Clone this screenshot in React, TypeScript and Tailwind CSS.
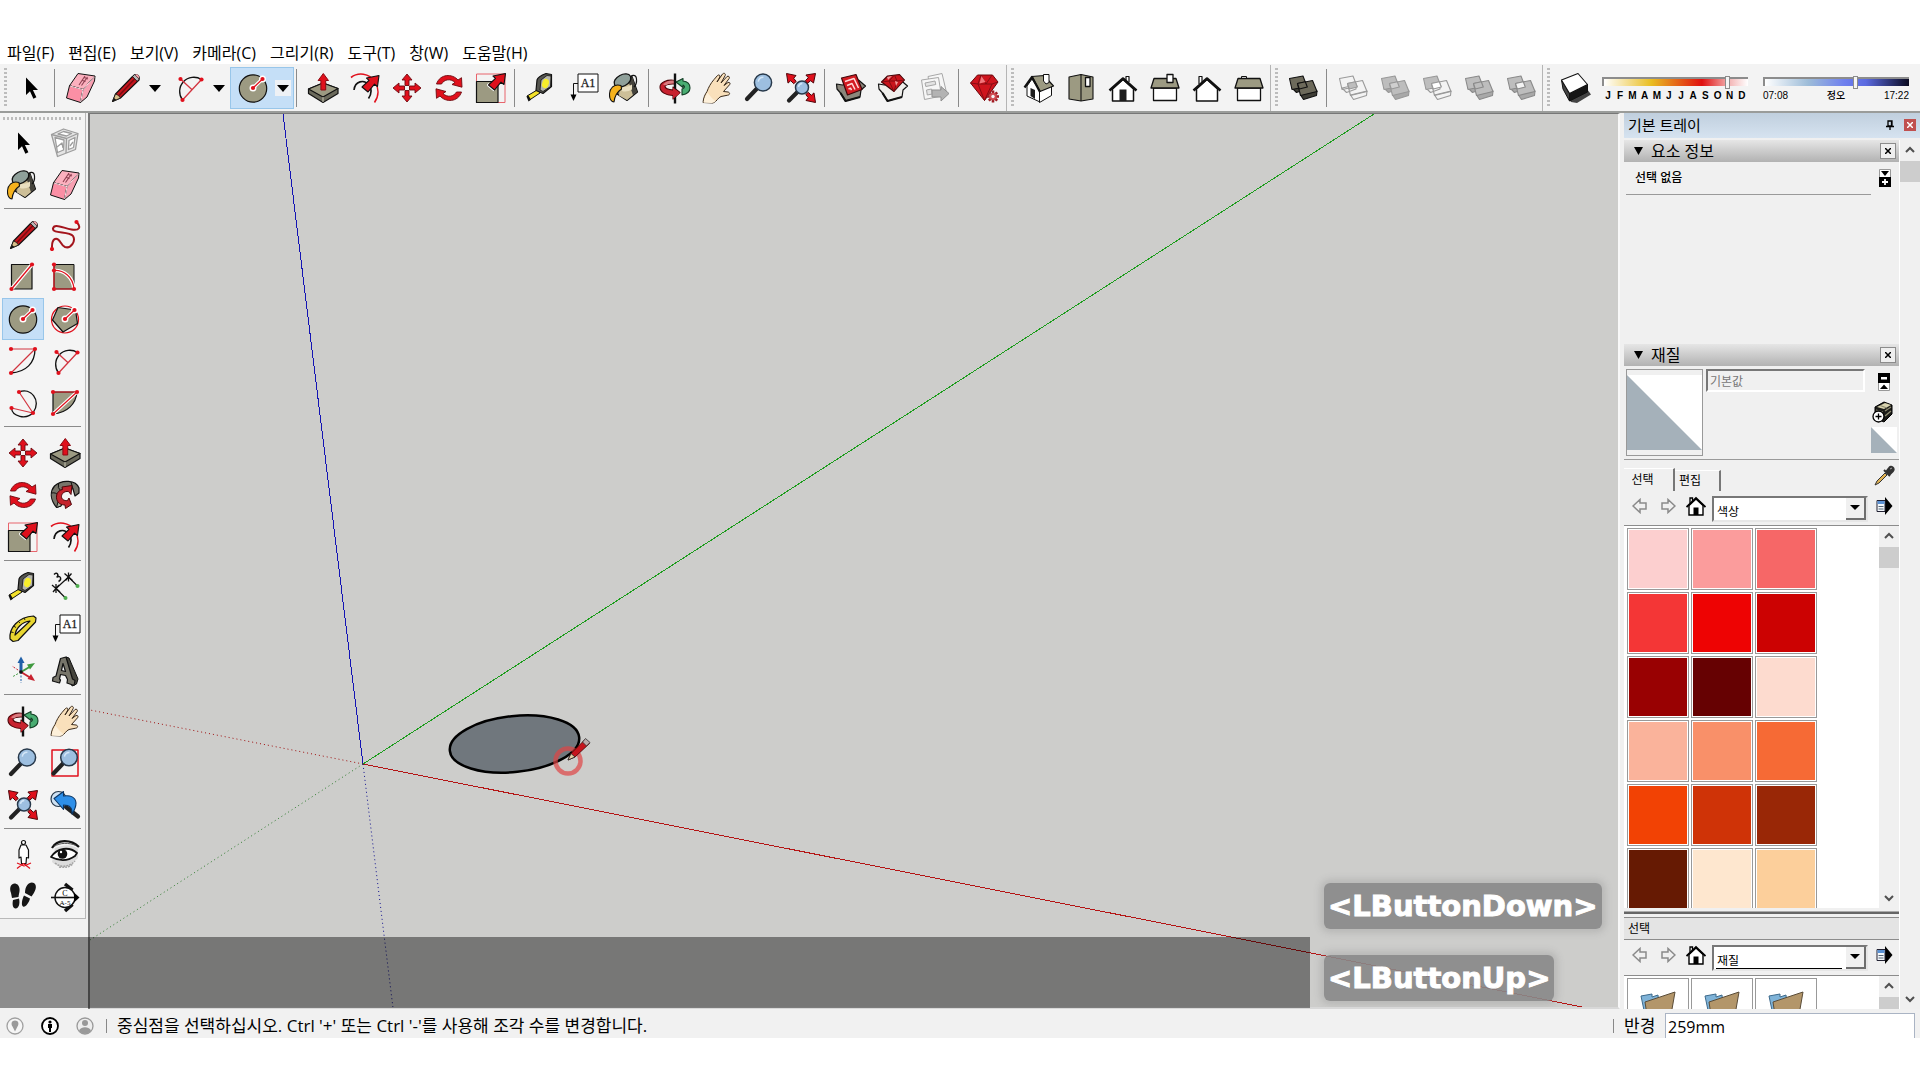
import React from "react";

type Kids = { children?: React.ReactNode };

const Svg = ({ children }: Kids) => (
  <svg viewBox="0 0 32 32" className="h-8 w-8 shrink-0" aria-hidden="true" strokeLinejoin="round">
    {children}
  </svg>
);

const K = "#111";
const R = "#e0101c";
const T = "#9c9a82";

/* ---------- shared shapes ---------- */
const Dot = ({ x, y }: { x: number; y: number }) => <circle cx={x} cy={y} r="2.1" fill={R} />;
const BigArrow = () => (
  <path d="M30.500 1.500 29 12.500l-3-2.300L19.500 18l-6-5L20.500 6.300 18 4Z" fill={R} stroke={K} strokeWidth="1.100" />
);
const Lens = ({ cx, cy, r, x2, y2 }: { cx: number; cy: number; r: number; x2: number; y2: number }) => (
  <>
    <path d={`M${cx - r * 0.7} ${cy + r * 0.7}L${x2} ${y2}`} stroke="#222" strokeWidth="4.200" strokeLinecap="round" />
    <circle cx={cx} cy={cy} r={r} fill="#9dbfe0" stroke="#27384a" strokeWidth="1.500" />
    <path d={`M${cx - r * 0.55} ${cy - r * 0.1}a${r * 0.6} ${r * 0.6} 0 0 1 ${r * 0.6} ${-r * 0.5}`} stroke="#d3e6f7" strokeWidth="1.500" fill="none" />
  </>
);

/* ---------- tool icons ---------- */
const Cursor = () => (
  <Svg>
    <path d="M11 5.500V23l4-3.700 3.400 7.400 3-1.500-3.500-7.200H23Z" fill="#000" />
  </Svg>
);
const Eraser = () => (
  <Svg>
    <path d="M13 1.500 30 4 18 17.500 4.500 13.700Z" fill="#fbb0be" stroke={K} />
    <path d="M4.500 13.700 18 17.500 15.500 30.500 1.500 26Z" fill="#fb8fa5" stroke={K} />
    <path d="M30 4 29.500 9 22 25 15.500 30.500 18 17.500Z" fill="#f8a0b2" stroke={K} />
    <path d="M5 14 18 17.600 15.600 30M18 17.600 29.500 4.700" stroke="#ffe3e8" fill="none" />
    <path d="m14 13 6-9m-3.500 9.500 6-8.500m-5 3.500 3 1m-1-4 3.500 1.500" stroke="#8d3f50" strokeWidth="1.100" fill="none" />
  </Svg>
);
const Pencil = () => (
  <Svg>
    <path d="M3.500 29.500 6.500 22 23.500 4.500Q26 1.500 28.500 3T30 8L11.500 26Z" fill="#c5151d" stroke={K} strokeWidth="1.100" />
    <path d="M3.500 29.500 6.500 22q3 .5 5 4Z" fill="#d9c08a" stroke={K} strokeWidth=".8" />
    <path d="M3.500 29.500 5 26l2.200 1.800Z" fill={K} />
    <path d="m10 23.500 16-17" stroke="#7b0a10" strokeWidth="1.500" />
    <path d="m23.500 4.500 2.200-2 4.500 4.600-2 2.200Z" fill="#b8b8b8" stroke={K} strokeWidth=".8" />
    <path d="M26 2.700q2-.9 3.200.3t.7 3.600Z" fill="#f3a2a8" />
  </Svg>
);
const ArcTwo = () => (
  <Svg>
    <path d="M28.500 7.500A14.200 14.200 0 0 0 9.500 28" fill="none" stroke={K} strokeWidth="1.300" />
    <path d="M28.500 7.500 9.500 28M7.500 7l11.300 10.500" stroke="#d23540" strokeWidth="1.300" />
    <Dot x={28.5} y={7.5} />
    <Dot x={9.5} y={28} />
    <Dot x={7.5} y={7} />
  </Svg>
);
const Spoke = () => (
  <>
    <path d="m16 16 9.500-9" stroke="#fff" strokeWidth="3.600" />
    <circle cx="16" cy="16" r="3.500" fill="#fff" />
    <circle cx="25.500" cy="7" r="3.500" fill="#fff" />
    <path d="m16 16 9.500-9" stroke={R} strokeWidth="1.300" />
    <Dot x={16} y={16} />
    <Dot x={25.5} y={7} />
  </>
);
const Circle = () => (
  <Svg>
    <circle cx="16" cy="16.500" r="13.700" fill={T} stroke={K} strokeWidth="1.200" />
    <Spoke />
  </Svg>
);
const Polygon = () => (
  <Svg>
    <circle cx="16" cy="16.500" r="13.500" fill="none" stroke={R} strokeWidth="1.200" />
    <path d="M9 4.500 26.500 7 28.500 20.500 14 29 3.500 17Z" fill={T} stroke={K} strokeWidth="1.200" />
    <Spoke />
  </Svg>
);
const PushPull = () => (
  <Svg>
    <path d="M1.500 17 16 11l15 5.500v5L16 30.500 1.500 21.500Z" fill="#6b6a5c" stroke={K} strokeWidth="1.200" />
    <path d="M1.500 17 16 11l15 5.500L16 25Z" fill={T} stroke={K} strokeWidth="1.200" />
    <path d="M16 25v5" stroke="#c9c7b4" strokeWidth="1" />
    <path d="M16.300 1.500 21.500 8.500h-2.800V18h-4.800V8.500h-2.800Z" fill={R} stroke="#8c0a12" strokeWidth="1" />
  </Svg>
);
const Offset = () => (
  <Svg>
    <path d="M2 5.500C9 0 20 1 26 9.500 30 16 30 24 25.500 30.500" fill="none" stroke={R} strokeWidth="1.600" />
    <path d="M5 18C6 9 15 7 20 13c3 4 2.500 9-.5 13.500" fill="none" stroke={K} strokeWidth="1.600" />
    <g transform="translate(-.5 2)">
      <BigArrow />
    </g>
  </Svg>
);
const Move = () => (
  <Svg>
    {[0, 90, 180, 270].map((a) => (
      <path key={a} transform={`rotate(${a} 16 16)`} d="M16 2 21 8h-3v5.500h-4V8h-3Z" fill={R} stroke="#6d0a10" strokeWidth=".9" />
    ))}
  </Svg>
);
const Rotate = () => (
  <Svg>
    {[0, 180].map((a) => (
      <path
        key={a}
        transform={`rotate(${a} 16 16)`}
        d="M3.500 12C7 1.500 19.500 1.500 25 8l3.500-2.300.5 9.500-10-2.700 3-2C17.500 6 11 7.500 8.500 12Z"
        fill={R}
        stroke="#6d0a10"
        strokeWidth=".9"
      />
    ))}
  </Svg>
);
const Scale = () => (
  <Svg>
    <path d="M1.500 30.500V2H30v28.500Z" fill="none" stroke="#e8646c" strokeWidth="1" />
    <path d="M1.500 9.500H23v21H1.500Z" fill={T} stroke={K} strokeWidth="1.200" />
    <path d="m19.500 18-6-5 1-1" stroke="#fff" strokeWidth="3" fill="none" />
    <BigArrow />
  </Svg>
);
const Tape = () => (
  <Svg>
    <path d="m2 24 11-6.500 2 3.500L4.500 28Z" fill="#f3e12a" stroke={K} />
    <path d="m1.500 24.500 2-1 2.500 4.300L3.500 29.500Z" fill={K} />
    <path d="M12 8q1-3.500 9-6.500l5.500 1v12l-8.500 7-7-3Z" fill="#55554f" stroke={K} strokeWidth="1.200" />
    <path d="m16 8 6-4.500 4 .5-.5 10.500-7.500 5-3-1.500Z" fill="#b5b5ad" stroke={K} strokeWidth=".8" />
    <ellipse cx="20.500" cy="11.500" rx="3.300" ry="4.700" transform="rotate(18 20.500 11.500)" fill="#f8ee2b" />
  </Svg>
);
const TextTool = () => (
  <Svg>
    <path d="M11 2h20v18H11Z" fill="#fff" stroke={K} />
    <path d="M11 11.500H6.500v12" fill="none" stroke={K} />
    <path d="M3.500 22.500h6l-3 6.500Z" fill="#000" />
    <text x="21" y="15" fontSize="12" textAnchor="middle" fontFamily="Liberation Serif, serif" stroke="#222" strokeWidth=".3" fill="#222">A1</text>
  </Svg>
);
const Bucket = () => (
  <Svg>
    <g transform="translate(-2 0)">
      <path d="M10 7 25 4.500 30.500 20 20 28.500 10 22Z" fill="#6e6a5e" stroke={K} strokeWidth="1.200" />
      <path d="m13 13 8.500-4 4.500 14-6 5-8-4.500Z" fill="#cdbf98" />
      <path d="m21.500 9 4.500 14 4-3-4.500-15Z" fill="#45433c" />
      <path d="M15 14.500q5 1.500 10-2v5q-5 3-10 1.500Z" fill="#e9dfc0" />
      <ellipse cx="15.500" cy="8.500" rx="9" ry="5.700" transform="rotate(-28 15.500 8.500)" fill="#8fa09a" stroke={K} strokeWidth="1.300" />
      <path d="M23.500 7c0-4.500 5.500-5 6 0 .3 3-.5 6-2.500 8" fill="none" stroke={K} strokeWidth="1.200" />
      <path d="M14 13.500C7 11.500 2.500 16 2.500 23c0 4 2 7 4.500 7 .5-5 3-10 7.500-13Z" fill="#f5b21d" stroke={K} strokeWidth="1.100" />
    </g>
  </Svg>
);
const Orbit = () => (
  <Svg>
    <path d="M17 10 24 6.500v2.500c5 .5 7 3.500 7 7 0 3.500-3 6-8 7v-6c2.500-.8 3-2 2-3-.8-.8-1-.9-1-.9v2.400Z" fill="#49ad72" stroke="#123f25" strokeWidth="1.100" />
    <path d="M16 8.500C8 7 1 10.500 1 15c0 5 6 8.500 13 8.500v3.500l7-6.500-7-5.500v3c-5-.3-8-2-8-3.500s4-3 10-2.500Z" fill="#c8222f" stroke="#4d0509" strokeWidth="1.100" />
    <path d="M16 8.500c-5-.6-10 1-12 4l3 1q2-2.500 9-2Z" fill="#d97b80" />
    <path d="M16 1.500v30" stroke={K} strokeWidth="2.400" />
    <path d="m14 15.500 7 5.500-7 6Z" fill="#c8222f" />
  </Svg>
);
const Hand = () => (
  <Svg>
    <path
      d="M2 30.500c.5-5 2-8 4-11 1.500-4 3.500-8 7-12l3.500-4c1.500-1.300 3 0 2.300 1.500L16 10l5.500-8c1.300-1.500 3.500-.4 2.700 1.500L20 11l6-6.500c1.300-1 3 .3 2.200 1.900L23 13.500l4-3c1.500-.7 2.800 1 1.600 2.200L22.500 19.500l4.500.5c2.300.5 2 3-.3 3.200L20 24.500c-3 1-4 5-8 6.500Z"
      fill="#f9e0bb"
      stroke="#3a2a1a"
      strokeWidth="1"
    />
    <path d="M2.500 30.700c1-5 2.500-8 4-10 3 4 6 7 8 8.500q-2 2-4 1.800Z" fill="#fdf0da" />
  </Svg>
);
const Zoom = () => (
  <Svg>
    <Lens cx={20} cy={10.5} r={8.6} x2={4} y2={27} />
  </Svg>
);
const ZoomWindow = () => (
  <Svg>
    <path d="M3 3h26v26H3Z" fill="none" stroke={R} strokeWidth="1.500" />
    <Lens cx={20} cy={10.5} r={8.3} x2={4.5} y2={26.5} />
  </Svg>
);
const ZoomExtents = () => (
  <Svg>
    <Lens cx={17} cy={15.5} r={6.5} x2={4} y2={28.5} />
    {[0, 90, 270].map((a) => (
      <path key={a} transform={`rotate(${a} 16 16)`} d="M30.500 1.500 28.500 11l-2.800-2.300-3.200 2.500-2.200-2.500 3-3-2.400-2.700Z" fill={R} stroke="#4d0509" strokeWidth="1" />
    ))}
  </Svg>
);
const ZoomPrevious = () => (
  <Svg>
    <circle cx="9.500" cy="10" r="7.500" fill="#cfe2f3" stroke="#27384a" strokeWidth="1.200" />
    <path d="m17 18 12 9.500" stroke="#222" strokeWidth="4.200" strokeLinecap="round" />
    <path d="M5 9.500 14.500 2.500V7c7-1 12 1 12.500 7 0 4-2 8-4 11 .5-6-2-9-8.500-9v4.500Z" fill="#2e8fe8" stroke="#0b3564" strokeWidth="1.100" />
  </Svg>
);
const BoxFlaps = ({ c }: { c: string }) => (
  <>
    <path d="m1.500 12 6 1 16-5 7 6-4.500 4-1 7-14.500 4-5-8-3.500-4Z" fill={c} stroke={K} strokeWidth="1.200" />
    <path d="m5.500 21 5 8 14.500-4" fill="none" stroke={K} strokeWidth="2.200" />
  </>
);
const Warehouse = () => (
  <Svg>
    <BoxFlaps c="#8a877c" />
    <path d="M6.500 6 21 2.500l6 15L12.500 23Z" fill="#d31b22" stroke="#41070a" strokeWidth="1.200" />
    <path d="m10 9.500 9-3 4.500 9.500M12 13.500l5-2 3 6M13.500 17l2-.8 1 2" fill="none" stroke="#ffd9d9" strokeWidth="1.500" />
  </Svg>
);
const ExtWarehouse = () => (
  <Svg>
    <BoxFlaps c="#f0efec" />
    <path d="m4.500 10 6-6 12-1.500 5 5.500-10.500 11.500Z" fill="#c9141c" stroke="#41070a" strokeWidth="1.100" />
    <path d="m4.500 10 7.500-1 5.500-6 2.500 6 7.500-1M12 9l5 10.500L20 9Z" fill="none" stroke="#7b0a10" strokeWidth=".9" />
    <path d="m10 5 5-1-4 4ZM18 9l3 1-2 4Z" fill="#f59a9c" />
  </Svg>
);
const LayoutOut = () => (
  <Svg>
    <g stroke="#a7a7a7" fill="#f6f6f6">
      <path d="M9 4.500 23 1.500l4.500 19L13 24Z" />
      <path d="m2.500 8 17-2.500 3 18.500-17 3.500Z" />
      <path d="m6 11 10-2 .8 3.500-10 2Zm1.500 7 5-1 .8 5-5 1Z" fill="#e3e3e3" />
      <path d="M13 18h9v-3.500l8 7-8 7.500v-4h-9Z" fill="#b3b3b3" stroke="#8f8f8f" />
    </g>
  </Svg>
);
const Ruby = () => (
  <Svg>
    <path d="m1.500 11 7-8h15l5.500 7L15.500 28.500Z" fill="#cf141d" stroke="#6b080d" />
    <path d="m1.500 11 7.500 1L12 3l5 9 6-9m6 7-6 2H9l6.500 16.500L23 12" fill="none" stroke="#7f0b12" strokeWidth=".9" />
    <path d="m12.500 4 4 6-6 1.500Z" fill="#f2777c" />
    <path d="M24 18.500v12M18 24.500h12M19.800 20.300l8.400 8.400M28.200 20.300l-8.400 8.400" stroke="#a01a22" strokeWidth="2.600" />
    <circle cx="24" cy="24.500" r="3.700" fill="#cf4a50" />
    <circle cx="24" cy="24.500" r="1.700" fill="#f3f3f3" />
  </Svg>
);
const HouseIso = () => (
  <Svg>
    <path d="m4 14 5-7 8 12v11L4 24Z" fill="#fff" stroke={K} />
    <path d="m16.500 19 12-5v9.500l-12 7Z" fill="#fff" stroke={K} />
    <path d="M9 4.500 21 3.500 30.500 14 17 19.500Z" fill={T} stroke={K} strokeWidth="1.200" />
    <path d="M1.500 15.500 9 5l8 15" fill="none" stroke={K} strokeWidth="2.200" />
    <path d="M20.500 9V2.500H26v8L23 12Z" fill="#fff" stroke={K} />
    <path d="m7.500 16 4.500 2v9l-4.500-3Z" fill="#1c1c1c" />
  </Svg>
);
const HouseTop = () => (
  <Svg>
    <path d="M4 5 16 2.500 28 5v22L16 29 4 27Z" fill={T} stroke={K} strokeWidth="1.100" />
    <path d="M16 2.500V29" stroke={K} strokeWidth="1.100" />
    <path d="M20.500 5.500H25v9h-4.500Z" fill="#fff" stroke={K} strokeWidth="1.300" />
  </Svg>
);
const HouseFront = ({ door, chimney }: { door?: boolean; chimney: number }) => (
  <Svg>
    <path d={`M${chimney} 12V4.500h3V10`} fill="#fff" stroke={K} strokeWidth="1.200" />
    <path d="M5.500 17 16 7.500 26.500 17v12h-21Z" fill="#fff" stroke={K} strokeWidth="1.500" />
    <path d="M2.500 18.500 16 6.500l13.500 12" fill="none" stroke={K} strokeWidth="2.600" />
    {door && <path d="M12.500 17.500h7V29h-7Z" fill="#1c1c1c" />}
  </Svg>
);
const HouseSide = ({ chimney }: { chimney: "front" | "back" }) => (
  <Svg>
    {chimney === "back" && <path d="M8.500 6.500v-2h5v2" fill="#fff" stroke={K} />}
    <path d="M4.500 16h23v12.500h-23Z" fill="#fff" stroke={K} strokeWidth="1.300" />
    <path d="M5 6.500h22L30 16H2Z" fill={T} stroke={K} strokeWidth="1.300" />
    {chimney === "front" && <path d="M18 2.500h6v8h-6Z" fill="#fff" stroke={K} strokeWidth="1.300" />}
  </Svg>
);
const Solid = ({ a, b, mid, line, side }: { a: string; b: string; mid: string; line: string; side: string }) => (
  <Svg>
    <g stroke={line} strokeWidth="1.100">
      <path d="m5 16 14-3v4l-9.500 3.500Z" fill={side} />
      <path d="M2.500 6.500 16 4l4 10.500-15 3Z" fill={a} />
      <path d="m13.500 23 16.500-4-.5 4.500-13 4Z" fill={side} />
      <path d="M10.500 11.500 25.500 8.500 30 19.500 13.500 23.500Z" fill={b} />
      <path d="m10.500 11.500 7.800-1.700 2 5.200-8 2Z" fill={mid} />
    </g>
  </Svg>
);
const ShadowBox = () => (
  <Svg>
    <path d="m8 25 20-8 4 5.500-14 8.500-6-1Z" fill="#444" />
    <path d="m2.500 8 8 13.500V29L4 17Z" fill="#444" stroke={K} />
    <path d="m10.500 21.500 18-9V20l-18 9Z" fill="#161616" stroke={K} />
    <path d="M2.500 8 19 1.500l9.500 11-18 9Z" fill="#fff" stroke={K} strokeWidth="1.100" />
  </Svg>
);
const Component = () => (
  <Svg>
    <g fill="#e4e4e4" stroke="#9d9d9d" strokeWidth="1.300">
      <path d="M2.500 7.500 14.500 2 29 6.500 26.500 22.500 8.500 29.500Z" />
      <path d="m2.500 7.500 15 4L29 6.500M17.500 11.500 17 26" fill="none" />
      <path d="m6 10.500 9 2.500-.5 10-6 2.500Zm14 3 6-3-1.500 10-5 2ZM9 7l5.500-2.500 8 2-5 2.500Z" fill="#fff" />
      <path d="m8 20 5-4 1 5M21 19l3-4" fill="none" />
    </g>
  </Svg>
);
const Freehand = () => (
  <Svg>
    <path d="M27.500 3c5 5 3 9-5 7.500C14 9 5 4 4 9.500 3 15 20 12 24 17c3 5-2 13-8 11-5-2-5-10-10-8-3.500 1.500-3 6-3 9" fill="none" stroke="#a3141c" strokeWidth="2" />
    <Dot x={27.5} y={3} />
    <Dot x={3} y={30} />
  </Svg>
);
const Rect = () => (
  <Svg>
    <path d="M4.500 3.500H25V28H4.500Z" fill={T} stroke={K} strokeWidth="1.200" />
    <path d="M4.500 28 25 3.500" stroke="#fff" strokeWidth="3.800" />
    <path d="M4.500 28 25 3.500" stroke={R} strokeWidth="1.300" />
    <Dot x={4.5} y={28} />
    <Dot x={25} y={3.5} />
  </Svg>
);
const RotRect = () => (
  <Svg>
    <path d="M5 3.500h20V28H5Z" fill={T} stroke={K} strokeWidth="1" />
    <path d="M5 9.500C15 9 24 16 25 28" stroke="#fff" strokeWidth="3.500" fill="none" />
    <path d="M5 3.500V28h20C24 16 15 9 5 9.500" stroke={R} strokeWidth="1.200" fill="none" />
    <Dot x={5} y={3.5} />
    <Dot x={5} y={9.5} />
    <Dot x={5} y={28} />
    <Dot x={25} y={28} />
  </Svg>
);
const ArcOne = () => (
  <Svg>
    <path d="M28 4C28 18 19 27 4 28" fill="none" stroke={K} strokeWidth="1.300" />
    <path d="M4 4h24L4 28" fill="none" stroke="#d23540" strokeWidth="1.200" />
    <Dot x={4} y={4} />
    <Dot x={28} y={4} />
    <Dot x={4} y={28} />
  </Svg>
);
const ArcThree = () => (
  <Svg>
    <path d="M12 5C24 0 34 13 26.500 25 19 34 5 29 4.500 21" fill="none" stroke={K} strokeWidth="1.300" />
    <path d="m12 5 14 21L4.500 21" fill="none" stroke="#d23540" strokeWidth="1.200" />
    <Dot x={12} y={5} />
    <Dot x={26} y={26} />
    <Dot x={4.5} y={21} />
  </Svg>
);
const Pie = () => (
  <Svg>
    <path d="M4 5h24C27 17 18 26 4 27Z" fill={T} stroke={K} strokeWidth="1.200" />
    <path d="M4 27 28 5" stroke="#fff" strokeWidth="3.600" />
    <path d="M4 5h24L4 27" fill="none" stroke={R} strokeWidth="1.200" />
    <Dot x={4} y={5} />
    <Dot x={28} y={5} />
    <Dot x={4} y={27} />
  </Svg>
);
const FollowMe = () => (
  <Svg>
    <path d="M30 9C27 1 13 0 5.500 7c-5 6-4 14 2 21.500l4.500-1.500 1-5C9 17 10 11 16 9l8 1 2 7 4-3Z" fill="#77756a" stroke={K} strokeWidth="1.200" />
    <path d="M9.500 4.500Q8 9 12 12M2.500 14q5-1 7 3M22 3l2 7" fill="none" stroke={K} />
    <path d="m7.500 28.500 4.500-1.500 1-5-4 1Z" fill="#a9a795" stroke={K} />
    <path d="m13 8 10-1.500-1 9-2.500-3c-4-.5-7 2-7 5 0 3 3 4.500 6 4l1.500-2.500 2.500 6.500-6 4-.5-3.500c-6 0-9-4-8.500-9 .5-4 3-6 6-6.500Z" fill="#c5222b" stroke="#4d0509" />
  </Svg>
);
const Dimension = () => (
  <Svg>
    <path d="M7 17.500 19.500 6M7 17.500l9 9M19.500 6l9 9" stroke={K} strokeWidth="1.200" />
    <path d="M3 14l8 7M4 21l6-7M7 13v9M15.500 2.500l8 7M16.500 9.500l6-7M19.500 1.500v9" stroke={K} strokeWidth="1.300" />
    <circle cx="16.500" cy="27" r="2" fill="#4fae4f" />
    <circle cx="28.500" cy="15" r="2" fill="#4fae4f" />
    <path d="M5 3.500c3-3 5 0 3 2.500 4-2 5 3 1.500 4.500" fill="none" stroke={K} strokeWidth="1.400" />
  </Svg>
);
const Protractor = () => (
  <Svg>
    <path fillRule="evenodd" d="M3 26C2 15 11 4 26.500 3l2.500 2-.5 4L11 27.500 6 28.500Zm5-4C9 15 15 9 23 8Z" fill="#e8d630" stroke={K} strokeWidth="1.200" />
    <path d="m4 19 2.500.5M6.500 13l2.500 1.500M11 8l2 2M17 5l1 2" stroke={K} strokeWidth=".9" />
  </Svg>
);
const Axes = () => (
  <Svg>
    <path d="M14 17V6" stroke="#1f5fa8" strokeWidth="3" />
    <path d="M10.500 8 14 1.500 17.500 8Z" fill="#1f5fa8" />
    <path d="m14 17 8.500-5" stroke="#3f9a3f" strokeWidth="2" />
    <path d="m20 9.500 8-1.500-5 6.500Z" fill="#3f9a3f" />
    <path d="m14 17 9 5.500" stroke="#c8222f" strokeWidth="2" />
    <path d="m20.500 24 7.500 2-4-7Z" fill="#c8222f" />
    <path d="m14 17-9-6" stroke="#c8222f" strokeDasharray="2 1.500" />
    <path d="m14 17-8 4.500" stroke="#3f9a3f" strokeDasharray="2 1.500" />
    <path d="M14 17v11" stroke="#1f5fa8" strokeDasharray="2 1.500" />
    <circle cx="14" cy="17" r="1.800" fill="#111" />
  </Svg>
);
const Text3d = () => (
  <Svg>
    <path d="m17 2 3 1 9 21-1.500 5-4.500 2Z" fill="#45443c" stroke={K} />
    <path fillRule="evenodd" d="M11.500 3.500 17 2l6.500 22 2.500 1.500-1 5-7-2.500.5-3.500-2-4-5-1L10.500 24l1 1-1 3-7-2 .5-3.500 3-1.500Zm2.500 5-1.500 7 4 1Z" fill="#77756a" stroke={K} strokeWidth="1.200" />
  </Svg>
);
const Walkman = () => (
  <Svg>
    <g fill="#fff" stroke={K} strokeWidth="1.200">
      <circle cx="16.500" cy="3.500" r="2" />
      <path d="M14 6h5l2.500 5v8l-2-.5-.5 6h-4.500L14 18l-2 1v-8Z" />
    </g>
    <path d="m10 29.500 6.500-5 6.500 5M10 24l7 3 7-3" stroke={R} fill="none" strokeWidth="1.200" />
  </Svg>
);
const Eye = () => (
  <Svg>
    <path d="M3 23c6 6 16 7 26-4V10Q20 3 6 9Z" fill="#dcdcdc" />
    <path d="M3 9C8 0 22 0 30 8" fill="none" stroke={K} strokeWidth="2.200" />
    <path d="M5 7.500c6-4 15-4 22-1" fill="none" stroke="#555" />
    <path d="M2 18C8 9 20 7 28 14l-2 3C19 22 10 22 2 18Z" fill="#fff" stroke={K} strokeWidth="1.800" />
    <circle cx="13.500" cy="15" r="4.800" fill="#111" />
    <circle cx="12" cy="13" r="1.200" fill="#fff" />
    <path d="M6 24c6 5 14 4 20-2M10 28c6 1 10 0 14-3" stroke="#a5a5a5" fill="none" strokeWidth="1.500" strokeDasharray="2 1" />
  </Svg>
);
const Feet = () => (
  <Svg>
    <path d="M4 12C1 4 7 0 11 4c3 4 1 8 .5 12L5 17Zm2 7 6-1.500c1.500 6-1 10.500-3.500 10S5 24 6 19Z" fill="#161616" />
    <path d="M18 12c0-8 5-12 9-10 4 3 1 9-2.500 13.500Zm-1 2.500 6 3C22 22 18 27 16 25.500s-1-7 1-11Z" fill="#161616" />
  </Svg>
);
const Section = () => (
  <Svg>
    <path d="m16 3 7.500 6M16 30l7.500-6.500" stroke={K} strokeWidth="3.500" />
    <circle cx="16" cy="16.500" r="10" fill="#fff" stroke={K} strokeWidth="1.400" />
    <path d="M2 16.500h27" stroke={K} strokeWidth="1.600" />
    <path d="m25 11.500 5.500 5-5.500 5Z" fill="#000" />
    <text x="16" y="14.500" fontSize="8" textAnchor="middle" fontFamily="Liberation Serif, serif">C</text>
    <text x="16" y="23.500" fontSize="7" textAnchor="middle" fontFamily="Liberation Serif, serif">A-5</text>
  </Svg>
);

/* ---------- toolbar parts ---------- */
const Tool = ({ label, on, children }: Kids & { label: string; on?: boolean }) => (
  <button
    type="button"
    aria-label={label}
    className={
      on
        ? "flex h-[42px] w-[42px] shrink-0 items-center justify-center border border-[#98c6ea] bg-[#c5dff7]"
        : "flex h-[42px] w-[42px] shrink-0 items-center justify-center"
    }
  >
    {children}
  </button>
);
const Split = ({ label, on, children }: Kids & { label: string; on?: boolean }) => (
  <div
    className={
      on
        ? "flex h-[42px] w-16 shrink-0 items-center justify-between border border-[#98c6ea] bg-[#c5dff7] pr-0.5 pl-1.5"
        : "flex h-[42px] w-16 shrink-0 items-center justify-between pr-[3px] pl-[7px]"
    }
  >
    <button type="button" aria-label={label}>{children}</button>
    <button type="button" aria-label={`${label} 옵션`} className={on ? "flex h-4 w-4 items-center justify-center bg-[#eef1f5]" : "flex h-4 w-4 items-center justify-center"}>
      <svg viewBox="0 0 12 7" className="h-[7px] w-3" aria-hidden="true"><path d="M0 0h12L6 7Z" /></svg>
    </button>
  </div>
);
const Sep = () => <span className="ml-0.5 mr-[5px] h-[38px] w-px shrink-0 bg-[#8a8a8a]" />;
const Grip = () => (
  <span className="flex h-full shrink-0 items-center">
    <span className="h-full w-px bg-[#b5b5b5]" />
    <span className="mx-1 h-10 w-[3px] bg-[repeating-linear-gradient(180deg,#bcbcbc_0_2px,transparent_2px_4px)]" />
  </span>
);
const SideSep = () => <div className="mx-1 mt-0.5 mb-[5px] h-px bg-[#8a8a8a]" />;
const Pair = ({ children }: Kids) => <div className="grid grid-cols-[42px_42px] pl-0.5">{children}</div>;

const Chevron = ({ up }: { up?: boolean }) => (
  <svg viewBox="0 0 12 12" className="h-3 w-3" aria-hidden="true">
    <path d={up ? "M2 8l4-4 4 4" : "M2 4l4 4 4-4"} fill="none" stroke="#505050" strokeWidth="2" />
  </svg>
);

const menus = ["파일(F)", "편집(E)", "보기(V)", "카메라(C)", "그리기(R)", "도구(T)", "창(W)", "도움말(H)"];

const MenuBar = () => (
  <nav className="flex h-6 items-center gap-3.5 pt-0.5 pl-[7px] text-base leading-none">
    {menus.map((m) => (
      <button type="button" key={m} className="whitespace-nowrap">{m}</button>
    ))}
  </nav>
);

const thumb =
  "[&::-webkit-slider-thumb]:h-[13px] [&::-webkit-slider-thumb]:w-[5px] [&::-webkit-slider-thumb]:appearance-none [&::-webkit-slider-thumb]:border [&::-webkit-slider-thumb]:border-[#8c8c8c] [&::-webkit-slider-thumb]:bg-[#f5f5f5]";

const TopBar = () => (
  <div className="flex h-[49px] shrink-0 items-center border-b-2 border-[#9a9c9a] bg-[#f3f3f3] pt-px">
    <span className="mr-[3px] ml-1 h-10 w-[3px] shrink-0 bg-[repeating-linear-gradient(180deg,#bcbcbc_0_2px,transparent_2px_4px)]" />
    <Tool label="선택"><Cursor /></Tool>
    <Sep />
    <Tool label="지우개"><Eraser /></Tool>
    <Split label="선"><Pencil /></Split>
    <Split label="호"><ArcTwo /></Split>
    <Split label="원" on><Circle /></Split>
    <Sep />
    <Tool label="밀기/끌기"><PushPull /></Tool>
    <Tool label="오프셋"><Offset /></Tool>
    <Tool label="이동"><Move /></Tool>
    <Tool label="회전"><Rotate /></Tool>
    <Tool label="배율"><Scale /></Tool>
    <Sep />
    <Tool label="줄자"><Tape /></Tool>
    <Tool label="텍스트"><TextTool /></Tool>
    <Tool label="페인트통"><Bucket /></Tool>
    <Sep />
    <Tool label="궤도"><Orbit /></Tool>
    <Tool label="이동 보기"><Hand /></Tool>
    <Tool label="확대/축소"><Zoom /></Tool>
    <Tool label="범위 확대"><ZoomExtents /></Tool>
    <Sep />
    <Tool label="3D Warehouse"><Warehouse /></Tool>
    <Tool label="Extension Warehouse"><ExtWarehouse /></Tool>
    <Tool label="LayOut"><LayoutOut /></Tool>
    <Sep />
    <Tool label="루비"><Ruby /></Tool>
    <Grip />
    <Tool label="등각"><HouseIso /></Tool>
    <Tool label="평면"><HouseTop /></Tool>
    <Tool label="정면"><HouseFront door chimney={19} /></Tool>
    <Tool label="오른쪽"><HouseSide chimney="front" /></Tool>
    <Tool label="후면"><HouseFront chimney={8} /></Tool>
    <Tool label="왼쪽"><HouseSide chimney="back" /></Tool>
    <Grip />
    <Tool label="외부 셸"><Solid a="#6d6a5b" b="#6d6a5b" mid="#6d6a5b" line="#111" side="#3f3e36" /></Tool>
    <Sep />
    <Tool label="교차"><Solid a="none" b="none" mid="#bdbdbd" line="#9a9a9a" side="none" /></Tool>
    <Tool label="결합"><Solid a="#bdbdbd" b="#bdbdbd" mid="#cfcfcf" line="#989898" side="#a8a8a8" /></Tool>
    <Tool label="빼기"><Solid a="#bdbdbd" b="none" mid="#ffffff" line="#989898" side="none" /></Tool>
    <Tool label="트림"><Solid a="#bdbdbd" b="#bdbdbd" mid="#bdbdbd" line="#8a8a8a" side="#a8a8a8" /></Tool>
    <Tool label="분할"><Solid a="#bdbdbd" b="#bdbdbd" mid="#f3f3f3" line="#8a8a8a" side="#a8a8a8" /></Tool>
    <Grip />
    <Tool label="그림자"><ShadowBox /></Tool>
    <div className="ml-1.5 w-[146px] shrink-0 pt-0.5">
      <input
        type="range"
        aria-label="날짜"
        min={0}
        max={100}
        defaultValue={87}
        className={`block h-[9px] w-full appearance-none border-t-2 border-l-2 border-[#8c8c8c] bg-[linear-gradient(90deg,#fff_0%,#e9bd20_33%,#e01010_68%,#f3b5b5_87%,#fff_100%)] ${thumb}`}
      />
      <div className="mt-1 flex justify-between px-0.5 font-['Liberation_Sans',sans-serif] text-[10px] leading-3 font-bold">
        {"JFMAMJJASOND".split("").map((m, i) => (
          <span key={i} className="w-2 text-center">{m}</span>
        ))}
      </div>
    </div>
    <div className="ml-[15px] w-[146px] shrink-0 pt-0.5">
      <input
        type="range"
        aria-label="시간"
        min={0}
        max={100}
        defaultValue={63}
        className={`block h-[9px] w-full appearance-none border-t-2 border-l-2 border-[#8c8c8c] bg-[linear-gradient(90deg,#fff_0%,#9dbcd8_30%,#6f80ee_55%,#5b6ae0_70%,#0a0a20_100%)] ${thumb}`}
      />
      <div className="mt-1 flex justify-between font-['Liberation_Sans','Noto_Sans_CJK_KR',sans-serif] text-[10px] leading-3 font-medium">
        <span>07:08</span>
        <span>정오</span>
        <span>17:22</span>
      </div>
    </div>
  </div>
);

const SideBar = () => (
  <aside className="w-[90px] shrink-0 border-r-2 border-[#777] bg-[#f1f1f1]">
    <div className="mr-0.5 border-r border-b border-[#b9b9b9] bg-[#f4f4f4] pt-1">
      <div className="mx-[3px] mb-0.5 h-[3px] bg-[repeating-linear-gradient(90deg,#bcbcbc_0_2px,transparent_2px_4px)]" />
      <Pair>
        <Tool label="선택"><Cursor /></Tool>
        <Tool label="구성 요소"><Component /></Tool>
        <Tool label="페인트통"><Bucket /></Tool>
        <Tool label="지우개"><Eraser /></Tool>
      </Pair>
      <SideSep />
      <Pair>
        <Tool label="선"><Pencil /></Tool>
        <Tool label="자유형"><Freehand /></Tool>
        <Tool label="직사각형"><Rect /></Tool>
        <Tool label="회전된 직사각형"><RotRect /></Tool>
        <Tool label="원" on><Circle /></Tool>
        <Tool label="다각형"><Polygon /></Tool>
        <Tool label="호"><ArcOne /></Tool>
        <Tool label="2점 호"><ArcTwo /></Tool>
        <Tool label="3점 호"><ArcThree /></Tool>
        <Tool label="파이"><Pie /></Tool>
      </Pair>
      <SideSep />
      <Pair>
        <Tool label="이동"><Move /></Tool>
        <Tool label="밀기/끌기"><PushPull /></Tool>
        <Tool label="회전"><Rotate /></Tool>
        <Tool label="따라가기"><FollowMe /></Tool>
        <Tool label="배율"><Scale /></Tool>
        <Tool label="오프셋"><Offset /></Tool>
      </Pair>
      <SideSep />
      <Pair>
        <Tool label="줄자"><Tape /></Tool>
        <Tool label="치수"><Dimension /></Tool>
        <Tool label="각도기"><Protractor /></Tool>
        <Tool label="텍스트"><TextTool /></Tool>
        <Tool label="축"><Axes /></Tool>
        <Tool label="3D 텍스트"><Text3d /></Tool>
      </Pair>
      <SideSep />
      <Pair>
        <Tool label="궤도"><Orbit /></Tool>
        <Tool label="이동 보기"><Hand /></Tool>
        <Tool label="확대/축소"><Zoom /></Tool>
        <Tool label="창 확대"><ZoomWindow /></Tool>
        <Tool label="범위 확대"><ZoomExtents /></Tool>
        <Tool label="이전"><ZoomPrevious /></Tool>
      </Pair>
      <SideSep />
      <Pair>
        <Tool label="카메라 위치"><Walkman /></Tool>
        <Tool label="둘러보기"><Eye /></Tool>
        <Tool label="걷기"><Feet /></Tool>
        <Tool label="단면"><Section /></Tool>
      </Pair>
    </div>
  </aside>
);

const KeyBadge = ({ children }: Kids) => (
  <div className="flex h-[46px] items-center rounded-md bg-[#888]/90 px-1 font-['DejaVu_Sans',sans-serif] text-[29px] leading-none font-bold text-white shadow-[0_0_6px_4px_rgba(140,140,140,0.3)] [-webkit-text-stroke:1px_white]">
    {children}
  </div>
);

const Viewport = () => (
  <main className="relative min-w-0 flex-1 overflow-hidden border-t border-r-2 border-b-2 border-t-[#777] border-r-[#f8f8f8] border-b-[#d8d8d8] bg-[#cdcdcb]">
    <svg viewBox="90 114 1528 894" preserveAspectRatio="xMinYMin slice" className="block h-full w-full" aria-label="모델">
      <g fill="none" strokeWidth="1" shapeRendering="crispEdges">
        <path d="M363 764 283 114" stroke="#1414b4" />
        <path d="M363 764 1374 114" stroke="#1c9c1c" />
        <path d="M363 764 1587 1008" stroke="#b41414" />
      </g>
      <g fill="none" strokeWidth="1" strokeDasharray="1 3">
        <path d="M363 764 90 710" stroke="#a01010" />
        <path d="M363 764 90 940" stroke="#2c7a2c" />
        <path d="m363 764 30 244" stroke="#101090" />
      </g>
      <ellipse cx="514.500" cy="744" rx="65" ry="28" transform="rotate(-6 514.500 744)" fill="#70777d" stroke="#000" strokeWidth="2.500" />
      <circle cx="568" cy="761" r="12.500" fill="none" stroke="#e04444" strokeOpacity=".7" strokeWidth="4.500" />
      <path d="m568 760 3-6.500 14-14 4.500 4-14.500 13.500Z" fill="#c5151d" stroke="#400" strokeWidth=".8" />
      <path d="m568 760 3-6.500 4 3.500Z" fill="#e4d3a8" stroke="#222" strokeWidth=".8" />
      <path d="m582.500 742 3-3.500 4.500 4-3.500 3.500Z" fill="#b9a9a9" stroke="#333" strokeWidth=".8" />
    </svg>
    <div className="absolute bottom-1.5 left-[1234px] flex flex-col items-start gap-[26px]">
      <KeyBadge>&lt;LButtonDown&gt;</KeyBadge>
      <KeyBadge>&lt;LButtonUp&gt;</KeyBadge>
    </div>
  </main>
);

const PanelHead = ({ children }: Kids) => (
  <div className="flex h-[22px] shrink-0 items-center bg-linear-to-b from-[#e6e6e6] to-[#b2b2b2] pr-[3px] pl-2.5">
    <svg viewBox="0 0 9 8" className="h-2 w-[9px]" aria-hidden="true"><path d="M0 0h9L4.500 8Z" /></svg>
    <h2 className="flex-1 pl-2 text-base leading-none">{children}</h2>
    <button type="button" aria-label="닫기" className="flex h-4 w-4 items-center justify-center border border-[#8c8c8c] bg-[#efefef]">
      <svg viewBox="0 0 6 6" className="h-1.5 w-1.5" aria-hidden="true"><path d="m0 0 6 6M6 0 0 6" stroke="#000" strokeWidth="1.500" /></svg>
    </button>
  </div>
);

const Expand = ({ down }: { down?: boolean }) => (
  <svg viewBox="0 0 12 18" className="h-[18px] w-3" aria-hidden="true">
    <path d="M.5.500h11v17H.5Z" fill="#fff" stroke="#999" />
    {down ? (
      <>
        <path d="M2 2h8L6 7Z" />
        <path d="M0 8h12v10H0Z" />
        <path d="M3 13h6M6 10v6" stroke="#fff" strokeWidth="1.800" />
      </>
    ) : (
      <>
        <path d="M0 0h12v10H0Z" />
        <path d="M3 4h6v2.500H3Z" fill="#fff" />
        <path d="M2 16h8l-4-4.500Z" />
      </>
    )}
  </svg>
);

const NavRow = ({ value, label, line }: { value: string; label: string; line?: boolean }) => (
  <div className="flex h-[35px] shrink-0 items-center pr-1.5 pl-2">
    <button type="button" aria-label="뒤로" className="mb-1.5">
      <svg viewBox="0 0 16 16" className="h-4 w-4" aria-hidden="true"><path d="M1 8 8 1.500V5h6v6H8v3.500Z" fill="none" stroke="#8a8a8a" strokeWidth="1.500" /></svg>
    </button>
    <button type="button" aria-label="앞으로" className="mb-1.5 ml-3">
      <svg viewBox="0 0 16 16" className="h-4 w-4" aria-hidden="true"><path d="M15 8 8 1.500V5H2v6h6v3.500Z" fill="none" stroke="#8a8a8a" strokeWidth="1.500" /></svg>
    </button>
    <button type="button" aria-label="모델에서" className="mb-1.5 ml-2.5">
      <svg viewBox="0 0 20 20" className="h-5 w-5" aria-hidden="true">
        <path d="M4 7V2h2.500v3" fill="#fff" stroke="#000" strokeWidth="1.300" />
        <path d="M3 9.500 10 3l7 6.500V19H3Z" fill="#fff" stroke="#000" strokeWidth="1.400" />
        <path d="M.5 11 10 2l9.500 9" fill="none" stroke="#000" strokeWidth="1.800" />
        <path d="M7.500 11.500h5V19h-5Z" />
      </svg>
    </button>
    <div className="relative ml-1.5 h-[26px] min-w-0 flex-1 border-2 border-t-[#777] border-r-[#e6e6e6] border-b-[#e6e6e6] border-l-[#777] bg-white">
      <select aria-label={label} className="h-full w-full appearance-none bg-transparent pl-[3px] text-xs leading-none">
        <option>{value}</option>
      </select>
      {line && <span className="pointer-events-none absolute right-6 bottom-0 left-0.5 h-px bg-black" />}
      <span className="pointer-events-none absolute top-0 right-0 flex h-[22px] w-5 items-center justify-center border-r-2 border-b-2 border-[#6e6e6e] bg-[#f0f0f0]">
        <svg viewBox="0 0 10 5" className="h-[5px] w-2.5" aria-hidden="true"><path d="M0 0h10L5 5Z" /></svg>
      </span>
    </div>
    <button type="button" aria-label="세부 정보" className="mb-1.5 ml-2">
      <svg viewBox="0 0 17 18" className="h-[18px] w-[17px]" aria-hidden="true">
        <path d="M7 4h2V0l7.500 9L9 18v-4H7Z" />
        <path d="M1 3.500h8v11H1Z" fill="#f4f8fc" stroke="#223" />
        <path d="M1.500 4h7v3h-7Z" fill="#5b92d4" />
        <path d="M2.500 9.500h5m-5 2.500h5" stroke="#567" />
      </svg>
    </button>
  </div>
);

const swatches: [string, string][] = [
  ["A01", "bg-[#fccfcf]"], ["A02", "bg-[#fb9c9c]"], ["A03", "bg-[#f66767]"],
  ["A04", "bg-[#f43636]"], ["A05", "bg-[#ee0303]"], ["A06", "bg-[#cc0202]"],
  ["A07", "bg-[#990102]"], ["A08", "bg-[#660102]"], ["B01", "bg-[#fddbcf]"],
  ["B02", "bg-[#fab39b]"], ["B03", "bg-[#f99069]"], ["B04", "bg-[#f66a35]"],
  ["B05", "bg-[#f24204]"], ["B06", "bg-[#cf3307]"], ["B07", "bg-[#992706]"],
  ["B08", "bg-[#661a03]"], ["C01", "bg-[#fee7cf]"], ["C02", "bg-[#fccf9b]"],
];

const Folder = () => (
  <svg viewBox="0 0 36 24" className="h-6 w-9" aria-hidden="true">
    <path d="m1 5 11-2v3l6-2 2 20H5Z" fill="#7fb3d8" stroke="#3d6a8c" />
    <path d="M5 11 35 1l-4 23H7Z" fill="#b3966a" stroke="#5a4c38" />
  </svg>
);

const Tray = () => (
  <aside className="flex w-[300px] shrink-0 flex-col bg-[#f0f0f0] pl-1">
    <header className="flex h-[25px] shrink-0 items-center bg-linear-to-b from-[#c0cfde] to-[#d6e3f0] pr-1 pb-px pl-1">
      <h1 className="flex-1 text-[15px] leading-none">기본 트레이</h1>
      <button type="button" aria-label="고정" className="mr-2.5">
        <svg viewBox="0 0 8 10" className="h-2.5 w-2" aria-hidden="true"><path d="M2 1h4v5H2ZM0 6.500h8M4 7v3M5.500 1v5" fill="none" stroke="#000" strokeWidth="1.300" /></svg>
      </button>
      <button type="button" aria-label="트레이 닫기" className="flex h-3 w-3 items-center justify-center bg-[#c0504f]">
        <svg viewBox="0 0 6 6" className="h-1.5 w-1.5" aria-hidden="true"><path d="m0 0 6 6M6 0 0 6" stroke="#fff" strokeWidth="1.500" /></svg>
      </button>
    </header>
    <div className="flex min-h-0 flex-1 pt-0.5">
      <div className="flex min-w-0 flex-1 flex-col">
        <PanelHead>요소 정보</PanelHead>
        <section className="h-[182px] shrink-0 pr-2 pl-0.5">
          <div className="mr-5 flex h-[33px] items-center border-b border-[#9a9a9a] pl-[9px]">
            <span className="flex-1 text-xs font-medium">선택 없음</span>
            <button type="button" aria-label="세부 정보 표시" className="-mr-5"><Expand down /></button>
          </div>
        </section>
        <PanelHead>재질</PanelHead>
        <section className="flex h-[94px] shrink-0 border-b border-[#9a9a9a] pt-[3px] pr-0.5 pl-0.5">
          <div className="h-[87px] w-[77px] border border-[#999] pt-[5px]">
            <svg viewBox="0 0 75 75" className="h-[75px] w-[75px] bg-white" aria-hidden="true"><path d="M0 0v75h75Z" fill="#a5b1ba" /></svg>
          </div>
          <input
            aria-label="재질 이름"
            disabled
            value="기본값"
            readOnly
            className="ml-[3px] h-[23px] min-w-0 flex-1 border-2 border-t-[#777] border-r-[#fff] border-b-[#fff] border-l-[#777] bg-[#f0f0f0] pl-0.5 text-xs leading-none text-[#777]"
          />
          <div className="flex w-8 flex-col items-end pt-1">
            <button type="button" aria-label="보조 창 표시" className="mr-[7px]"><Expand /></button>
            <button type="button" aria-label="재질 만들기" className="mt-2.5 mr-1">
              <svg viewBox="0 0 21 22" className="h-[22px] w-[21px]" aria-hidden="true">
                <path d="m3 6 9-5 8 3v9l-8 8-9-4Z" fill="#1b1b18" stroke="#000" />
                <path d="m5 6 8-4 6 2-7 4Z" fill="#d9d4b0" />
                <path d="m8 4.500 7 2.500M13 10l6-4m-6 9 6-5M4 9l7 2" stroke="#8e8b70" strokeWidth="1.300" />
                <circle cx="6.500" cy="15.500" r="5.500" fill="#fff" stroke="#000" strokeWidth="1.300" />
                <path d="M3.500 15.500h6m-3-3v6" stroke="#000" strokeWidth="1.300" />
              </svg>
            </button>
            <svg viewBox="0 0 26 26" className="mt-1 h-[26px] w-[26px] bg-white" aria-hidden="true"><path d="M0 0v26h26Z" fill="#a5b1ba" /></svg>
          </div>
        </section>
        <section className="flex h-[31px] shrink-0 items-end pr-1 text-xs leading-none" role="tablist">
          <button type="button" role="tab" aria-selected="true" className="h-[23px] w-[51px] border-t border-r-2 border-t-white border-r-[#777] pr-3">선택</button>
          <button type="button" role="tab" aria-selected="false" className="h-[21px] w-[46px] border-t border-r-2 border-t-white border-r-[#777] pr-3.5">편집</button>
          <button type="button" aria-label="샘플 페인트" className="mb-1 ml-auto">
            <svg viewBox="0 0 22 22" className="h-[22px] w-[22px]" aria-hidden="true">
              <path d="m2 20 2-4 8-8 2 2-8 8Z" fill="#e0b253" stroke="#333" />
              <path d="m11 5 6 6M13 7l3-4c2-3 6 0 4 3l-4 4Z" fill="#333" stroke="#333" strokeWidth="2" />
              <path d="m17 4 2-1" stroke="#aaa" />
            </svg>
          </button>
        </section>
        <NavRow value="색상" label="재질 모음" />
        <div className="-mt-px flex min-h-0 flex-1 border-t border-[#8c8c8c]">
          <div className="grid min-w-0 flex-1 grid-cols-[62px_62px_62px] content-start gap-0.5 overflow-hidden bg-white pt-0.5 pl-[3px]">
            {swatches.map(([name, color]) => (
              <button type="button" key={name} aria-label={name} className="h-[62px] border border-[#999] p-px">
                <span className={`block h-full w-full ${color}`} />
              </button>
            ))}
          </div>
          <div className="flex w-5 shrink-0 flex-col items-center bg-[#f0f0f0] pt-1">
            <Chevron up />
            <span className="mt-[5px] h-[21px] w-5 bg-[#cdcdcd]" />
            <span className="mt-auto mb-1"><Chevron /></span>
          </div>
        </div>
        <div className="mt-[3px] mb-[3px] h-[3px] shrink-0 border-t border-b-2 border-t-[#aaa] border-b-[#666]" />
        <div className="flex h-[23px] shrink-0 items-center border-y border-[#8c8c8c] bg-[#e4e4e4] pl-1 text-xs">선택</div>
        <NavRow value="재질" label="보조 모음" line />
        <div className="flex h-[34px] shrink-0 border-t border-[#8c8c8c]">
          <div className="grid min-w-0 flex-1 grid-cols-[62px_62px_62px] gap-0.5 overflow-hidden bg-white pt-0.5 pl-[3px]">
            {["벽돌", "석재", "목재"].map((f) => (
              <button type="button" key={f} aria-label={f} className="flex h-[62px] justify-center border border-[#999] pt-3"><Folder /></button>
            ))}
          </div>
          <div className="flex w-5 shrink-0 flex-col items-center bg-[#f0f0f0] pt-1">
            <Chevron up />
            <span className="mt-[5px] w-5 flex-1 bg-[#cdcdcd]" />
          </div>
        </div>
      </div>
      <div className="flex w-[21px] shrink-0 flex-col items-center border-l border-white bg-[#f0f0f0] pt-1">
        <Chevron up />
        <span className="mt-[5px] h-[21px] w-5 bg-[#cdcdcd]" />
        <span className="mt-auto mb-1"><Chevron /></span>
      </div>
    </div>
  </aside>
);

const StatusBar = () => (
  <footer className="flex h-[29px] shrink-0 items-center bg-[#f1f1f1] pt-1 pl-1.5 leading-none">
    <button type="button" aria-label="위치 정보">
      <svg viewBox="0 0 18 18" className="h-[18px] w-[18px]" aria-hidden="true">
        <circle cx="9" cy="9" r="8" fill="#f6f6f6" stroke="#a0a0a0" strokeWidth="1.300" />
        <path d="M9 3.500c4 0 4 4 2.500 6L9 14.500 6.500 9.500C5 7.500 5 3.500 9 3.500Z" fill="#9a9a9a" />
      </svg>
    </button>
    <button type="button" aria-label="크레디트" className="ml-[17px]">
      <svg viewBox="0 0 18 18" className="h-[18px] w-[18px]" aria-hidden="true">
        <circle cx="9" cy="9" r="8" fill="#fff" stroke="#000" strokeWidth="1.800" />
        <circle cx="9" cy="5" r="1.600" />
        <path d="M7 7h4v4h-1v4H8v-4H7Z" />
      </svg>
    </button>
    <button type="button" aria-label="로그인" className="ml-[17px]">
      <svg viewBox="0 0 18 18" className="h-[18px] w-[18px]" aria-hidden="true">
        <circle cx="9" cy="9" r="8" fill="#eee" stroke="#999" strokeWidth="1.300" />
        <circle cx="9" cy="6" r="3" fill="#999" />
        <path d="M3 14c1-5 11-5 12 0-3 3.500-9 3.500-12 0Z" fill="#999" />
      </svg>
    </button>
    <span className="mr-2.5 ml-3 h-3.5 w-px bg-[#888]" />
    <p className="flex-1 text-[17px] leading-none whitespace-nowrap">중심점을 선택하십시오. Ctrl '+' 또는 Ctrl '-'를 사용해 조각 수를 변경합니다.</p>
    <span className="mr-2.5 h-3.5 w-px bg-[#888]" />
    <label htmlFor="measure" className="w-[41px] text-[17px] leading-none">반경</label>
    <input id="measure" defaultValue="259mm" className="mr-[5px] h-[25px] w-[250px] border-x border-t border-[#aab4c4] bg-white pt-0.5 pl-0.5 text-base leading-none" />
  </footer>
);

export default function App() {
  return (
    <div className="flex h-screen flex-col bg-white pt-10 pb-[42px] font-['Open_Sans','Noto_Sans_CJK_KR',sans-serif] text-black">
      <MenuBar />
      <TopBar />
      <div className="relative flex min-h-0 flex-1">
        <SideBar />
        <Viewport />
        <Tray />
        <div className="pointer-events-none absolute bottom-px left-0 h-[71px] w-[1310px] bg-black/42" />
      </div>
      <StatusBar />
    </div>
  );
}
